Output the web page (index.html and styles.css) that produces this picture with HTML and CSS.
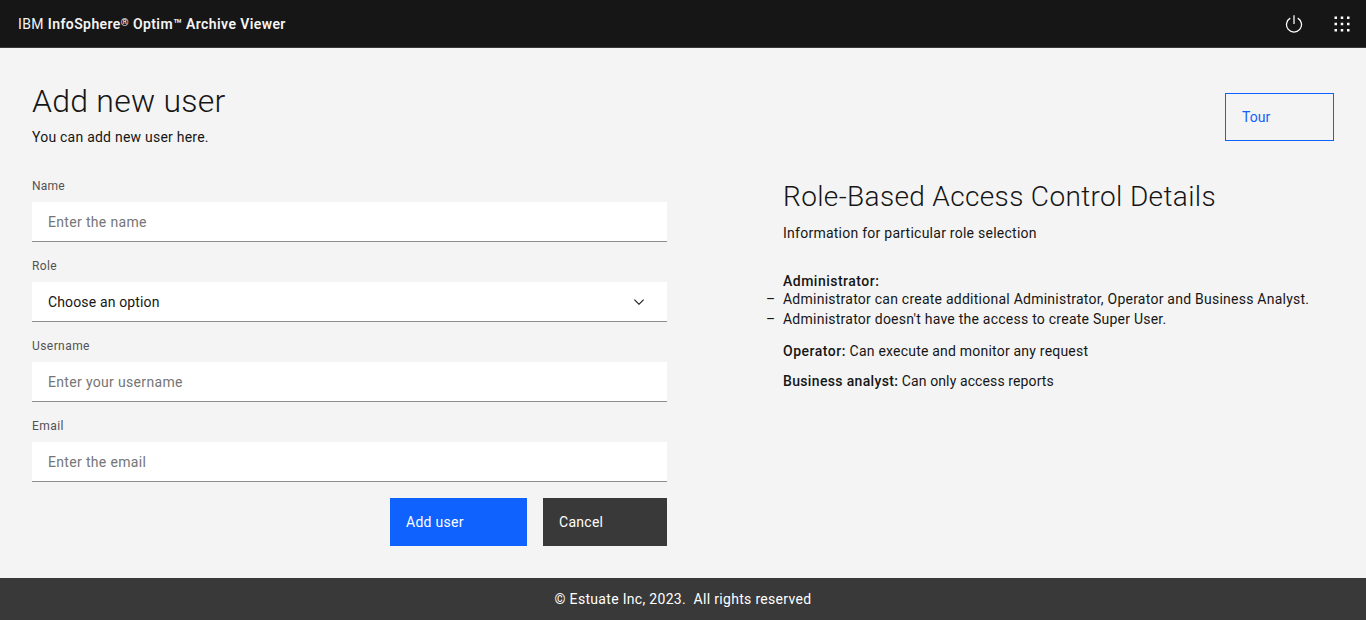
FILE: index.html
```html
<!DOCTYPE html>
<html lang="en">
<head>
<meta charset="utf-8">
<title>Add new user</title>
<link rel="stylesheet" href="styles.css">
</head>
<body>
<header class="header">
  <div class="brand"><span class="brand-prefix">IBM</span><span class="brand-name">InfoSphere<span class="registered">®</span> Optim™ Archive Viewer</span></div>
  <div class="header-actions">
    <svg class="icon" viewBox="0 0 32 32"><path d="M22.5 5.74l-1 1.73a11 11 0 1 1-11 0l-1-1.73a13 13 0 1 0 13 0z"/><path d="M15 2h2v14h-2z"/></svg>
    <svg class="icon" viewBox="0 0 32 32"><path d="M14 4h4v4h-4zM4 4h4v4H4zM24 4h4v4h-4zM14 14h4v4h-4zM4 14h4v4H4zM24 14h4v4h-4zM14 24h4v4h-4zM4 24h4v4H4zM24 24h4v4h-4z"/></svg>
  </div>
</header>
<main class="content">
  <section class="form-column">
    <h1 class="page-title">Add new user</h1>
    <p class="page-subtitle">You can add new user here.</p>
    <form class="form">
      <div class="field"><label class="label" for="name">Name</label><input class="input" id="name" placeholder="Enter the name"></div>
      <div class="field"><span class="label label-role">Role</span><div class="input select"><span>Choose an option</span><svg class="chevron" viewBox="0 0 16 16"><path d="M8 11L3 6l.7-.7L8 9.6l4.3-4.3.7.7z"/></svg></div></div>
      <div class="field"><label class="label label-wide" for="username">Username</label><input class="input" id="username" placeholder="Enter your username"></div>
      <div class="field"><label class="label label-wide" for="email">Email</label><input class="input" id="email" placeholder="Enter the email"></div>
      <div class="actions"><button type="button" class="btn primary">Add user</button><button type="button" class="btn secondary">Cancel</button></div>
    </form>
  </section>
  <section class="info-column">
    <button type="button" class="btn tour">Tour</button>
    <h2 class="info-title">Role-Based Access Control Details</h2>
    <p class="info-subtitle">Information for particular role selection</p>
    <p class="role-heading"><b class="administrator">Administrator:</b></p>
    <ul class="role-list">
      <li>Administrator can create additional Administrator, Operator and Business Analyst.</li>
      <li>Administrator doesn't have the access to create Super User.</li>
    </ul>
    <p class="role-line"><b class="operator">Operator:</b> Can execute and monitor any request</p>
    <p class="role-line analyst-line"><b class="analyst">Business analyst:</b> Can only access reports</p>
  </section>
</main>
<footer class="footer">© Estuate Inc, 2023.&nbsp; All rights reserved</footer>
</body>
</html>
```
FILE: styles.css
```css
* { box-sizing: border-box; }
body {
  margin: 0;
  height: 620px;
  display: flex;
  flex-direction: column;
  background: #f4f4f4;
  color: #161616;
  font: 400 14px/18px Roboto, sans-serif;
  letter-spacing: 0.23px;
  overflow: hidden;
}
h1, h2, p, ul { margin: 0; padding: 0; font-weight: inherit; }
b { font-weight: 500; }

.header {
  height: 48px;
  flex: none;
  background: #161616;
  border-bottom: 1px solid #393939;
  color: #f4f4f4;
  display: flex;
  align-items: center;
  justify-content: space-between;
  padding: 0 14px 0 18px;
}
.brand { display: flex; gap: 4px; padding-top: 1px; }
.brand-prefix { letter-spacing: 0.35px; }
.brand-name { font-weight: 600; letter-spacing: 0.4px; }
.registered { font-size: 10px; line-height: 1; vertical-align: 3px; }
.header-actions { display: flex; gap: 28px; padding-top: 1px; }
.icon { width: 20px; height: 20px; fill: #fff; }

.content { flex: 1; display: flex; justify-content: space-between; padding: 0 32px; }
.form-column { width: 635px; padding-top: 33px; }
.page-title { font-size: 32px; line-height: 40px; font-weight: 300; letter-spacing: 0.25px; }
.page-subtitle { margin-top: 7px; }
.form { margin-top: 32px; display: flex; flex-direction: column; gap: 16px; }
.field { display: flex; flex-direction: column; gap: 8px; }
.label { font-size: 12px; line-height: 16px; color: #525252; letter-spacing: 0.25px; }
.label-role { letter-spacing: 0.35px; }
.label-wide { letter-spacing: 0.43px; }
.input {
  width: 100%;
  height: 40px;
  background: #fff;
  border: 0;
  border-bottom: 1px solid #8d8d8d;
  border-radius: 0;
  padding: 0 16px;
  display: flex;
  align-items: center;
  justify-content: space-between;
  font: inherit;
  letter-spacing: 0.33px;
}
.input::placeholder { color: #757575; }
.select { padding-right: 20px; letter-spacing: 0.14px; }
.chevron { width: 16px; height: 16px; fill: #161616; }
.actions { display: flex; justify-content: flex-end; gap: 16px; }
.btn {
  font: inherit;
  letter-spacing: 0.28px;
  border: 0;
  text-align: left;
  padding: 0 16px;
  height: 48px;
  color: #fff;
}
.primary { background: #0f62fe; width: 137px; }
.secondary { background: #393939; width: 124px; }

.info-column { width: 551px; padding-top: 45px; }
.tour {
  display: block;
  margin-left: auto;
  width: 109px;
  border: 1px solid #0f62fe;
  background: transparent;
  color: #0f62fe;
  letter-spacing: 0;
}
.info-title { font-size: 28px; line-height: 36px; margin-top: 38px; font-weight: 300; letter-spacing: 0.35px; }
.info-subtitle { margin-top: 9px; letter-spacing: 0.25px; }
.role-heading { margin-top: 30px; }
.administrator { letter-spacing: 0.49px; }
.role-list { list-style: none; line-height: 20px; letter-spacing: 0.24px; margin-top: -1px; }
.role-list li { display: flex; }
.role-list li::before { content: "–"; width: 17px; margin-left: -17px; flex: none; }
.role-line { margin-top: 13px; letter-spacing: 0.21px; }
.operator { letter-spacing: 0.51px; }
.analyst-line { margin-top: 12px; letter-spacing: 0.11px; }
.analyst { letter-spacing: 0.34px; }

.footer {
  height: 42px;
  flex: none;
  background: #393939;
  color: #fff;
  display: flex;
  align-items: center;
  justify-content: center;
  letter-spacing: 0.31px;
}
```
